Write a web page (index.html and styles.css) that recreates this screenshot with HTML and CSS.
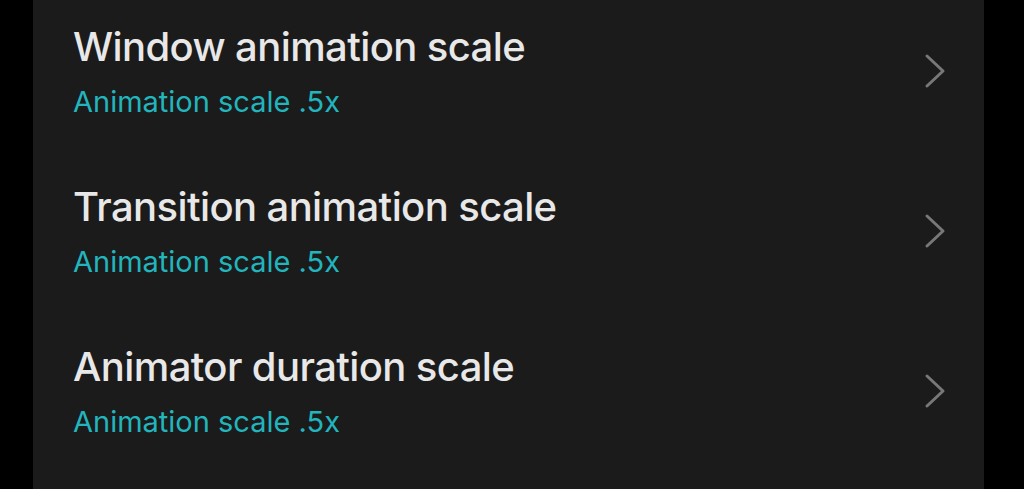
FILE: index.html
```html
<!DOCTYPE html>
<html lang="en">
<head>
  <meta charset="UTF-8">
  <meta name="viewport" content="width=device-width, initial-scale=1.0">
  <title>Developer options</title>
  <link rel="stylesheet" href="styles.css">
</head>
<body>
  <div class="panel">
    <div class="row">
      <div class="text">
        <div class="title">Window animation scale</div>
        <div class="summary">Animation scale .5x</div>
      </div>
      <svg class="chevron" viewBox="0 0 22 36"><path d="M3 3 L19 18 L3 33"/></svg>
    </div>
    <div class="row">
      <div class="text">
        <div class="title">Transition animation scale</div>
        <div class="summary">Animation scale .5x</div>
      </div>
      <svg class="chevron" viewBox="0 0 22 36"><path d="M3 3 L19 18 L3 33"/></svg>
    </div>
    <div class="row">
      <div class="text">
        <div class="title">Animator duration scale</div>
        <div class="summary">Animation scale .5x</div>
      </div>
      <svg class="chevron" viewBox="0 0 22 36"><path d="M3 3 L19 18 L3 33"/></svg>
    </div>
  </div>
</body>
</html>
```

FILE: styles.css
```css
body {
  margin: 0;
  background-color: #000000;
  font-family: Inter, "Noto Sans", sans-serif;
  height: 489px;
  overflow: hidden;
}

.panel {
  margin-left: 33px;
  width: 951px;
  height: 489px;
  background-color: #1b1b1b;
  overflow: hidden;
}

.row {
  display: flex;
  align-items: center;
  justify-content: space-between;
  height: 160px;
  padding-left: 40px;
  padding-right: 38px;
  box-sizing: border-box;
}

/* list is scrolled a little, first row starts above the top edge */
.row:first-child {
  margin-top: -9px;
}

.title {
  color: #e8e8e8;
  font-size: 40px;
  font-weight: 500;
  line-height: 48px;
  letter-spacing: -0.6px;
}

.summary {
  color: #22b5bd;
  font-size: 29px;
  line-height: 36px;
  margin-top: 13px;
}

.chevron {
  width: 22px;
  height: 36px;
  fill: none;
  stroke: #787878;
  stroke-width: 3;
  stroke-linecap: round;
  stroke-linejoin: round;
}
```
